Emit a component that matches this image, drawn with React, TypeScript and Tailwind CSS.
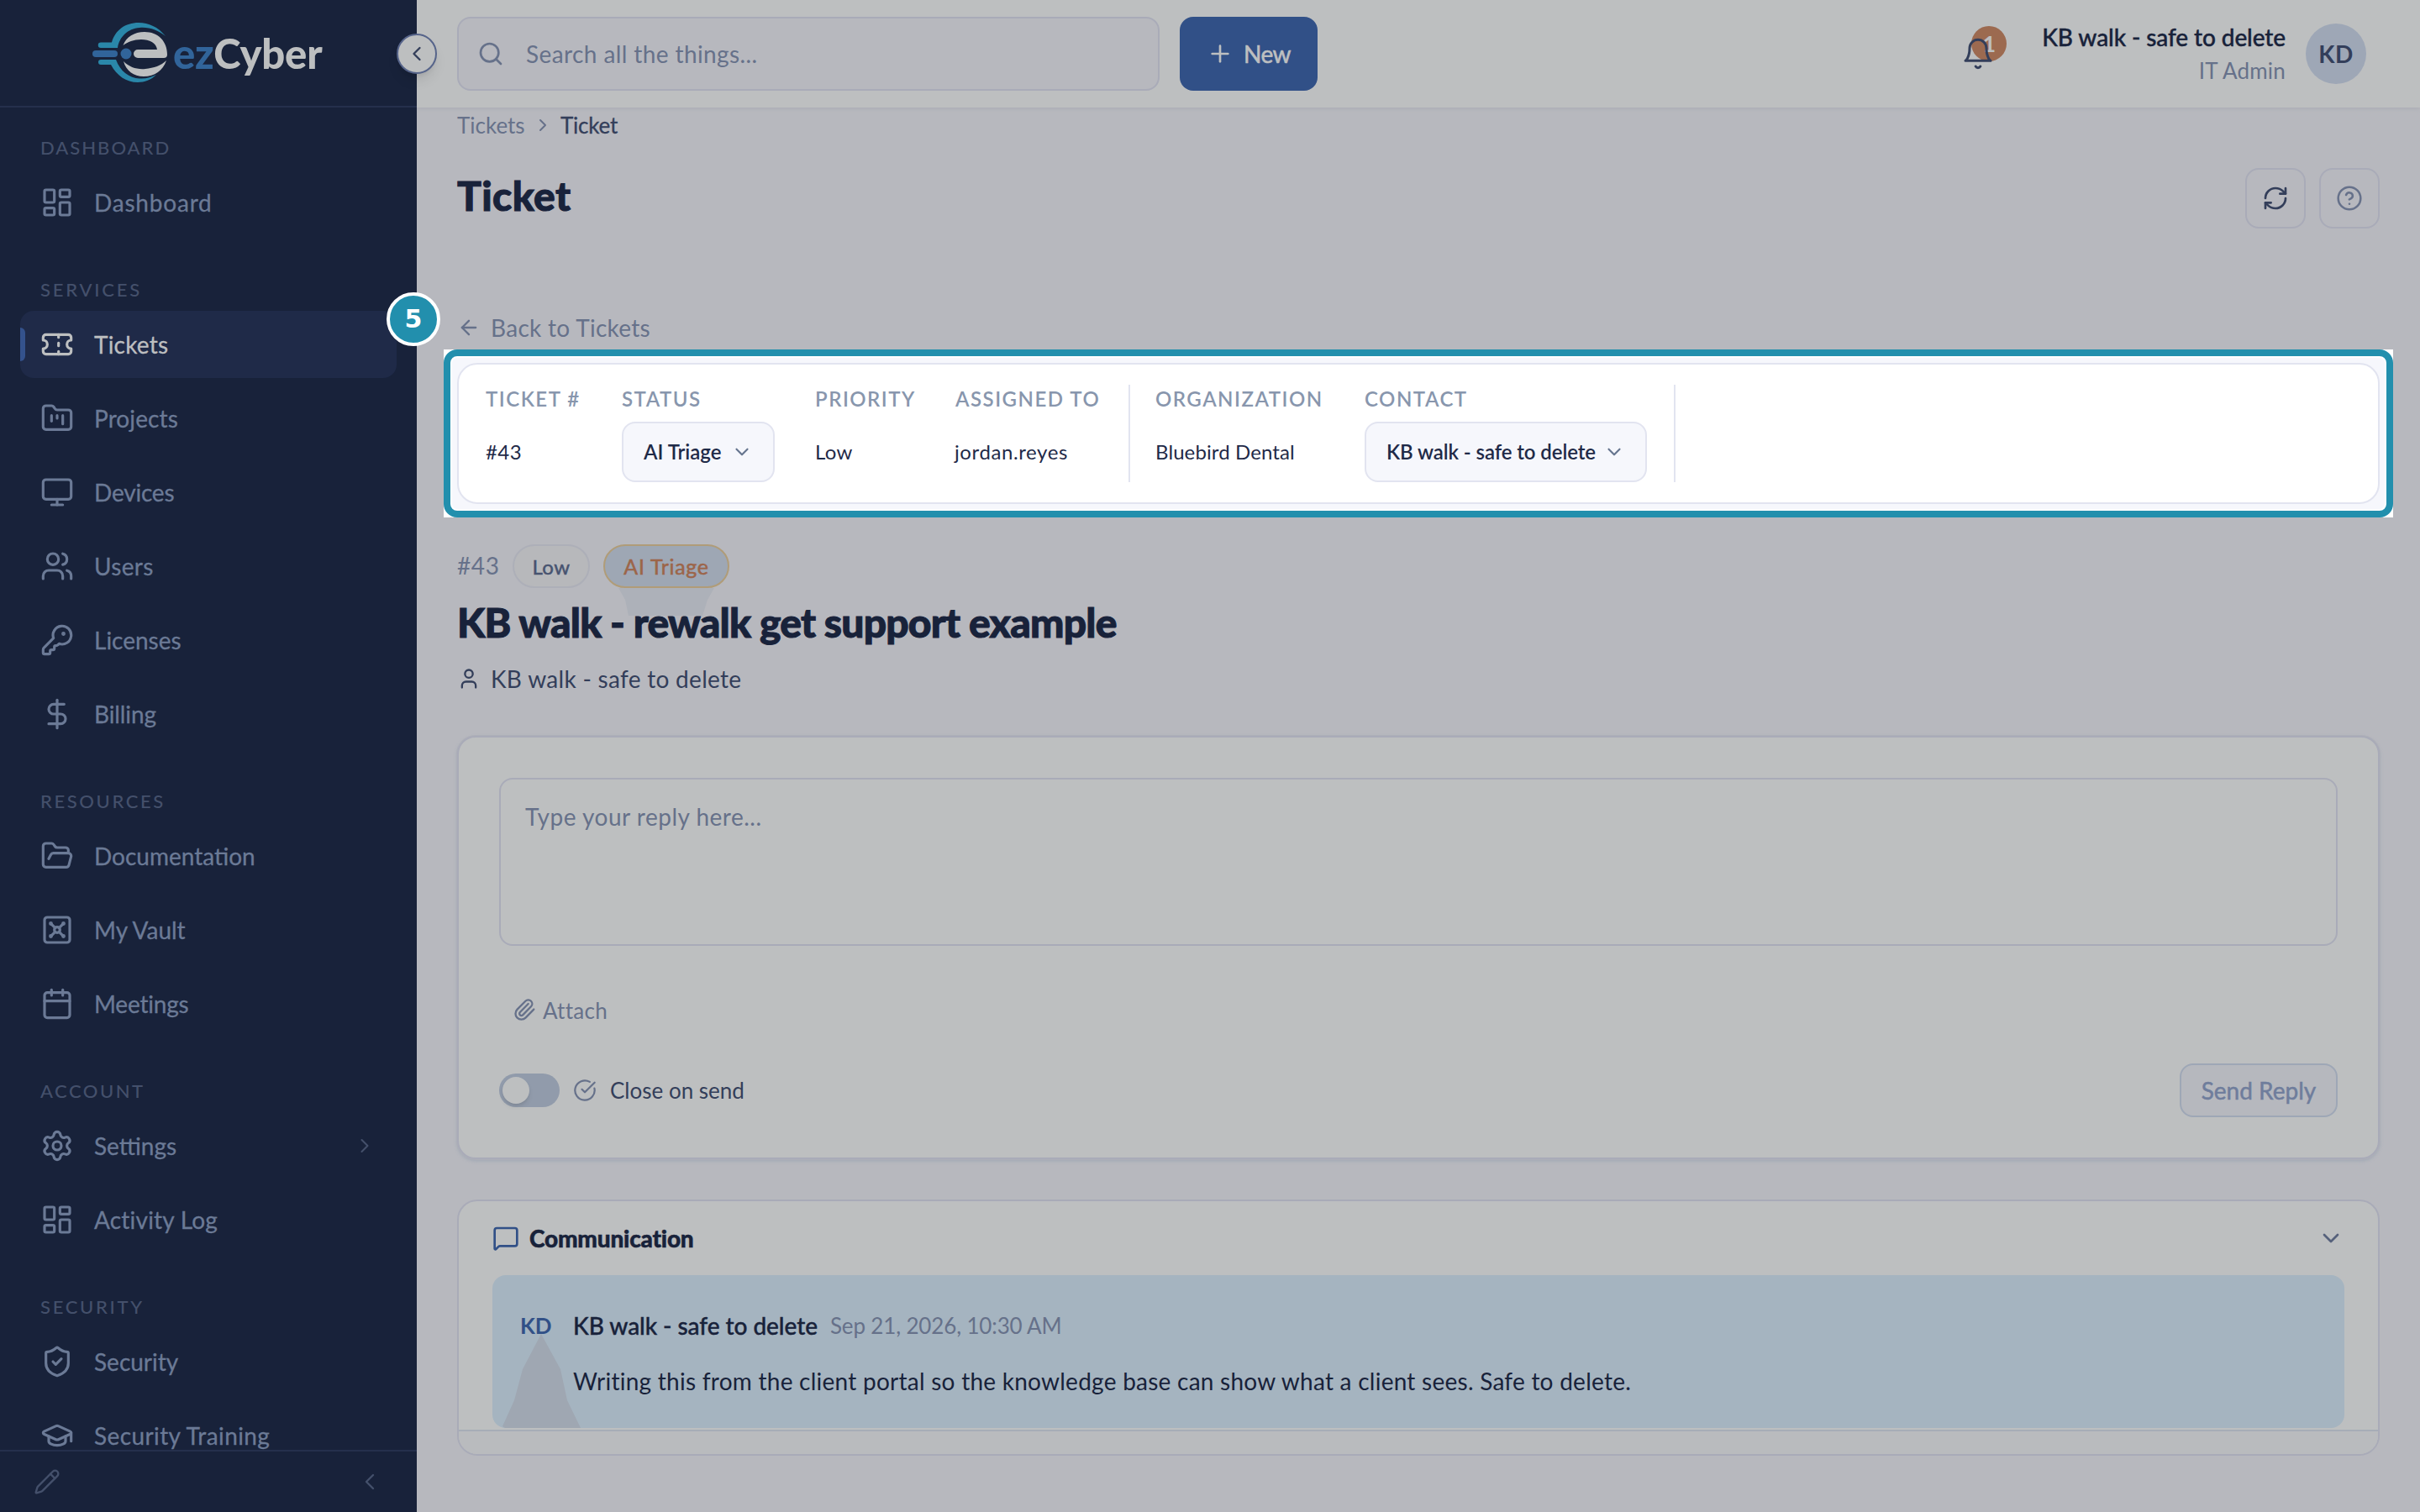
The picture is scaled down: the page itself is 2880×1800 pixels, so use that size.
import type { ReactNode } from "react";
import {
  ArrowLeft,
  Calendar,
  ChevronDown,
  ChevronLeft,
  ChevronRight,
  CircleCheckBig,
  CircleQuestionMark,
  DollarSign,
  FolderKanban,
  FolderOpen,
  GraduationCap,
  KeyRound,
  LayoutDashboard,
  MessageSquare,
  Monitor,
  Paperclip,
  Pencil,
  Plus,
  RefreshCw,
  Search,
  Settings,
  ShieldCheck,
  Ticket,
  User,
  Users,
  Vault,
  type LucideIcon,
} from "lucide-react";

type NavItem = { label: string; icon: LucideIcon; track: string; active?: boolean; more?: boolean };

const sections: { title: string; track: string; items: NavItem[] }[] = [
  {
    title: "Dashboard",
    track: "tracking-[2px]",
    items: [{ label: "Dashboard", icon: LayoutDashboard, track: "tracking-[0.8px]" }],
  },
  {
    title: "Services",
    track: "tracking-[2.8px]",
    items: [
      { label: "Tickets", icon: Ticket, track: "tracking-[0.2px]", active: true },
      { label: "Projects", icon: FolderKanban, track: "tracking-[0.1px]" },
      { label: "Devices", icon: Monitor, track: "tracking-[-0.2px]" },
      { label: "Users", icon: Users, track: "tracking-[0.3px]" },
      { label: "Licenses", icon: KeyRound, track: "tracking-normal" },
      { label: "Billing", icon: DollarSign, track: "tracking-[-0.1px]" },
    ],
  },
  {
    title: "Resources",
    track: "tracking-[2.6px]",
    items: [
      { label: "Documentation", icon: FolderOpen, track: "tracking-normal" },
      { label: "My Vault", icon: Vault, track: "tracking-normal" },
      { label: "Meetings", icon: Calendar, track: "tracking-[-0.2px]" },
    ],
  },
  {
    title: "Account",
    track: "tracking-[2.5px]",
    items: [
      { label: "Settings", icon: Settings, track: "tracking-normal", more: true },
      { label: "Activity Log", icon: LayoutDashboard, track: "tracking-[0.2px]" },
    ],
  },
  {
    title: "Security",
    track: "tracking-[2.7px]",
    items: [
      { label: "Security", icon: ShieldCheck, track: "tracking-normal" },
      { label: "Security Training", icon: GraduationCap, track: "tracking-[0.4px]" },
    ],
  },
];

function Logo() {
  return (
    <div className="flex h-[70px] items-center gap-1.5 pl-[110px]">
      <svg width="90" height="72" viewBox="0 0 90 72" fill="none">
        {/* outer ring with the two tails */}
        <path
          d="M87 16C78 5 67 0 55 0C39 0 27 9 23 23.500H10A3 3 0 0 0 10 30H30C32 17 42 7 56 6C68 5 78 9 87 16Z"
          fill="#2a87a9"
        />
        <path
          d="M76 62C70 68 62 71 54 71C40 71 29 63 22 50H10A3 3 0 0 1 10 44H28C33 58 44 66 56 66.500C64 67 70 65 76 62Z"
          fill="#2a87a9"
        />
        <rect x="0" y="33" width="30" height="8" rx="4" fill="#31649a" />
        <circle cx="40" cy="37" r="6.500" fill="#31649a" />
        {/* inner e */}
        <path
          d="M36.500 27C40 17 50 11 62 11C78 11 89 22 89 38C89 41 87 42 85 42H54A5 5 0 0 1 54 32H77C76 24 68 20 58 20C49 20 42 23 36.500 27Z"
          fill="#bdbfc0"
        />
        <path d="M37 46C44 53 53 56 63 55C73 54 82 51 88 45C84 57 74 64 61 64C49 64 40 57 37 46Z" fill="#bdbfc0" />
      </svg>
      <span className="text-[49px] leading-none font-black tracking-[-0.2px] text-[#bdbfc0]">
        <span className="text-[#31649a]">ez</span>Cyber
      </span>
    </div>
  );
}

function Sidebar() {
  return (
    <aside className="relative flex h-full w-[496px] shrink-0 flex-col bg-[#18223a] text-[#6b7a96]">
      <div className="h-32 shrink-0 border-b-2 border-[#25304c] pt-7">
        <Logo />
      </div>
      <nav className="flex min-h-0 flex-1 flex-col overflow-hidden px-6">
        {sections.map((section, i) => (
          <div key={section.title}>
            <div
              className={`${i === 0 ? "h-[73px]" : "h-[89px]"} flex flex-col justify-end pb-[12px] pl-6 text-[22px] leading-[26px] font-medium text-[#44506b] uppercase ${section.track}`}
            >
              {section.title}
            </div>
            <div className="flex flex-col gap-2">
              {section.items.map(({ label, icon: Icon, track, active, more }) => (
                <div
                  key={label}
                  className={`relative flex h-20 items-center rounded-2xl pr-6 pl-6 text-[28px] [-webkit-text-stroke:0.3px] ${track} ${active ? "bg-[#1f2a48] text-[#bdbfc0]" : ""}`}
                >
                  {active && <span className="absolute top-5 left-0 h-10 w-1.5 rounded-r-md bg-[#34528c]" />}
                  <Icon size={40} strokeWidth={1.9} />
                  <span className="ml-6 flex-1">{label}</span>
                  {more && <ChevronRight size={28} strokeWidth={1.8} className="text-[#44506b]" />}
                </div>
              ))}
            </div>
          </div>
        ))}
      </nav>
      <div className="flex h-[74px] shrink-0 items-center justify-between border-t-2 border-[#25304c] pr-10 pl-10 text-[#44506b]">
        <Pencil size={32} strokeWidth={1.8} />
        <ChevronLeft size={32} strokeWidth={1.8} />
      </div>
      <button className="absolute top-10 -right-6 z-10 flex size-12 items-center justify-center rounded-full border-2 border-[#56648a] bg-[#bdbfc0] text-[#333e5a] shadow-lg">
        <ChevronLeft size={28} strokeWidth={2} />
      </button>
    </aside>
  );
}

function TopBar() {
  return (
    <header className="flex h-32 shrink-0 items-center bg-[#bdbfc0] pr-16 pl-12 shadow-[0_2px_4px_#adafb6]">
      <div className="flex h-[88px] w-[836px] items-center rounded-2xl border-2 border-[#a9abb8] bg-[#b7b8be] pl-[22px] text-[#66718a]">
        <Search size={32} strokeWidth={2} />
        <span className="ml-[26px] text-[28px] tracking-[0.4px]">Search all the things...</span>
      </div>
      <button className="ml-6 flex h-[88px] w-[164px] items-center rounded-2xl bg-[#315087] pl-8 text-[28px] text-[#bdbfc0]">
        <Plus size={32} strokeWidth={2} />
        <span className="ml-3 tracking-[-0.5px] [-webkit-text-stroke:0.6px]">New</span>
      </button>
      <div className="relative ml-auto h-12 w-[52px]">
        <span className="absolute -top-[9px] left-[12px] flex size-[42px] items-center justify-center rounded-full bg-[#9c6a50] text-[27px] font-bold text-[#bdbfc0]">
          1
        </span>
        <svg
          className="absolute top-1 left-0"
          width="40"
          height="40"
          viewBox="0 0 24 24"
          fill="none"
          stroke="#333e5a"
          strokeWidth="1.800"
          strokeLinecap="round"
          strokeLinejoin="round"
        >
          <path d="M6 8a6 6 0 0 1 12 0c0 7 3 9 3 9H3s3-2 3-9" />
          <path d="M10.300 21a1.940 1.940 0 0 0 3.400 0" />
        </svg>
      </div>
      <div className="ml-[44px] text-right">
        <div className="text-[28px] leading-10 font-medium tracking-[-0.1px] text-[#18223a] [-webkit-text-stroke:0.4px]">
          KB walk - safe to delete
        </div>
        <div className="text-[26px] leading-10 tracking-[0.2px] text-[#66718a]">IT Admin</div>
      </div>
      <div className="ml-6 flex size-[72px] items-center justify-center rounded-full bg-[#9ea7b6] text-[28px] font-bold tracking-[0.4px] text-[#333e5a]">
        KD
      </div>
    </header>
  );
}

function Field({ label, className, children }: { label: string; className: string; children: ReactNode }) {
  return (
    <div className={`shrink-0 whitespace-nowrap ${className}`}>
      <div className="h-[44px] pt-[2px] text-[24px] leading-[30px] font-semibold tracking-[1.5px] text-[#8896ad] uppercase">
        {label}
      </div>
      <div className="flex h-[72px] items-center text-[24px] text-[#1f2a48]">{children}</div>
    </div>
  );
}

function Select({ value, className }: { value: string; className: string }) {
  return (
    <div
      className={`flex h-[72px] items-center justify-between rounded-2xl border-2 border-[#e2e4f0] bg-[#f6f7fc] pr-6 pl-6 font-semibold ${className}`}
    >
      {value}
      <ChevronDown size={26} strokeWidth={2} className="text-[#66758f]" />
    </div>
  );
}

function DetailsBar() {
  return (
    <div className="relative -mx-4 bg-white">
      <div className="rounded-2xl border-8 border-[#228fad] bg-[#f6f7fc] p-2 shadow-[inset_0_0_0_2px_#fff]">
        <div className="flex h-[168px] rounded-3xl border-2 border-[#e2e4f0] bg-white pt-6 pl-8">
          <Field label="Ticket #" className="w-[162px]">
            <span className="tracking-[0.4px]">#43</span>
          </Field>
          <Field label="Status" className="w-[230px]">
            <Select value="AI Triage" className="w-[182px] tracking-[0px]" />
          </Field>
          <Field label="Priority" className="w-[167px]">
            <span className="tracking-[0.3px]">Low</span>
          </Field>
          <Field label="Assigned To" className="w-[206px]">
            <span className="-ml-px tracking-[0.6px]">jordan.reyes</span>
          </Field>
          <div className="mr-[30px] h-[116px] w-0.5 shrink-0 bg-[#e2e4f0]" />
          <Field label="Organization" className="w-[249px]">
            <span className="tracking-[0.1px]">Bluebird Dental</span>
          </Field>
          <Field label="Contact" className="w-[368px]">
            <Select value="KB walk - safe to delete" className="w-[336px] tracking-[-0.1px]" />
          </Field>
          <div className="h-[116px] w-0.5 shrink-0 bg-[#e2e4f0]" />
        </div>
      </div>
      <span
        className="absolute -top-[68px] -left-[68px] flex size-16 items-center justify-center rounded-full border-4 border-white bg-[#228fad] pb-0.5 text-[30px] font-bold text-white"
        style={{ fontFamily: "'DejaVu Sans', sans-serif" }}
      >
        5
      </span>
    </div>
  );
}

function TicketHeading() {
  return (
    <div className="mt-8 flex flex-col">
      <div className="relative flex h-[52px] items-center">
        <span className="w-[66px] pb-0.5 text-[28px] tracking-[0.6px] text-[#66718a]">#43</span>
        <span className="flex h-[52px] w-[92px] items-center justify-center rounded-full border-2 border-[#adafb8] bg-[#b7b8bb] pt-0.5 text-[24px] tracking-[0.5px] text-[#475370] [-webkit-text-stroke:0.5px]">
          Low
        </span>
        <span className="ml-4 flex h-[52px] w-[150px] items-center justify-center rounded-full border-2 border-[#b09c78] bg-[#9ea7b4] pt-0.5 text-[25px] tracking-[0.7px] text-[#9c6549] [-webkit-text-stroke:0.5px]">
          AI Triage
        </span>
        <svg className="absolute top-[52px] left-[192px]" width="114" height="33" viewBox="0 0 114 33">
          <path d="M0 0H114L106 14L100 33H12L8 14Z" fill="#adb1b9" />
        </svg>
      </div>
      <h2 className="relative mt-[11px] text-[48px] leading-[60px] font-black tracking-[-0.8px] text-[#18223a] [-webkit-text-stroke:1px]">
        KB walk - rewalk get support example
      </h2>
      <div className="mt-[17px] flex h-10 items-center text-[28px] text-[#333e5a]">
        <User size={28} strokeWidth={2} />
        <span className="ml-3 tracking-[0.3px]">KB walk - safe to delete</span>
      </div>
    </div>
  );
}

function ReplyCard() {
  return (
    <section className="mt-12 h-[504px] rounded-[22px] border-2 border-[#a9abb8] bg-[#bdbfc0] px-12 pt-12 shadow-[0_0_0_1px_#adafb8,0_2px_4px_#9ea7b4]">
      <div className="h-[200px] rounded-2xl border-2 border-[#a9abb8] px-[29px] pt-[23px] text-[28px] leading-[42px] tracking-[0.5px] text-[#66718a]">
        Type your reply here...
      </div>
      <div className="mt-14 flex h-10 items-center pl-4 text-[26px] text-[#66718a]">
        <Paperclip size={28} strokeWidth={2} />
        <span className="ml-2 pt-0.5 tracking-[0.3px]">Attach</span>
      </div>
      <div className="mt-11 flex h-16 items-center">
        <span className="flex h-10 w-[72px] items-center rounded-full bg-[#919bab] px-1">
          <span className="size-8 rounded-full bg-[#bdbfc0] shadow-md" />
        </span>
        <CircleCheckBig size={28} strokeWidth={1.900} className="ml-4 text-[#66718a]" />
        <span className="ml-4 text-[26px] text-[#333e5a]">Close on send</span>
        <button className="ml-auto flex h-16 w-[188px] items-center justify-center rounded-2xl border-2 border-[#9ea7b6] bg-[#b6b8be] text-[28px] text-[#6f7d9c] [-webkit-text-stroke:0.5px]">
          Send Reply
        </button>
      </div>
    </section>
  );
}

function Communication() {
  return (
    <section className="mt-12 flex h-[305px] flex-col overflow-hidden rounded-3xl border-2 border-[#a9abb8] bg-[#bdbfc0]">
      <div className="flex h-[88px] shrink-0 items-center pr-10 pl-10 text-[#18223a]">
        <MessageSquare size={32} strokeWidth={2} className="text-[#315087]" />
        <span className="ml-3 text-[28px] font-black tracking-[-0.2px] [-webkit-text-stroke:0.5px]">Communication</span>
        <ChevronDown size={32} strokeWidth={2} className="ml-auto text-[#56617b]" />
      </div>
      <div className="relative mx-10 h-[182px] shrink-0 rounded-2xl bg-[#a5b4c0] pt-[38px] pl-[34px]">
        <svg className="absolute top-[70px] left-3" width="94" height="112" viewBox="0 0 94 112">
          <path d="M46 0L24 42L14 79L0 110L3 112H93L77 79L69 42Z" fill="#9fa7b2" />
        </svg>
        <div className="relative flex h-11 items-center">
          <span className="-ml-px w-[63px] text-[26px] font-bold text-[#315087]">KD</span>
          <span className="text-[28px] font-medium tracking-[-0.05px] text-[#18223a] [-webkit-text-stroke:0.4px]">
            KB walk - safe to delete
          </span>
          <span className="ml-[15px] text-[26px] tracking-[-0.15px] text-[#66718a]">Sep 21, 2026, 10:30 AM</span>
        </div>
        <p className="relative mt-6 pl-[62px] text-[28px] leading-10 tracking-[0.25px] text-[#18223a]">
          Writing this from the client portal so the knowledge base can show what a client sees. Safe to delete.
        </p>
      </div>
      <div className="mt-0.5 flex-1 border-t-2 border-[#a6adb7] bg-[#b9bbbe]" />
    </section>
  );
}

export default function App() {
  return (
    <div className="flex h-[1800px] w-[2880px] overflow-hidden bg-[#b7b8be]" style={{ fontFamily: "Lato, sans-serif" }}>
      <Sidebar />
      <div className="flex min-w-0 flex-1 flex-col">
        <TopBar />
        <main className="flex flex-col px-12">
          <div className="mt-[3px] flex h-9 items-center text-[26px] text-[#66718a]">
            <span className="w-[90px]">Tickets</span>
            <ChevronRight size={24} strokeWidth={2} />
            <span className="ml-[9px] tracking-[-0.2px] text-[#333e5a] [-webkit-text-stroke:0.3px]">Ticket</span>
          </div>
          <div className="mt-[33px] flex h-[72px] items-center">
            <h1 className="pb-[6px] text-[48px] leading-none font-black tracking-[0.4px] text-[#18223a] [-webkit-text-stroke:1px]">
              Ticket
            </h1>
            <button className="ml-auto flex size-[72px] items-center justify-center rounded-2xl border-2 border-[#a9abb8] text-[#333e5a]">
              <RefreshCw size={32} strokeWidth={2} />
            </button>
            <button className="ml-4 flex size-[72px] items-center justify-center rounded-2xl border-2 border-[#a9abb8] text-[#66718a]">
              <CircleQuestionMark size={32} strokeWidth={1.900} />
            </button>
          </div>
          <div className="mt-[98px] mb-[6px] flex h-10 items-center text-[28px] text-[#66718a]">
            <ArrowLeft size={28} strokeWidth={2} />
            <span className="ml-3 tracking-[0.3px]">Back to Tickets</span>
          </div>
          <DetailsBar />
          <TicketHeading />
          <ReplyCard />
          <Communication />
        </main>
      </div>
    </div>
  );
}
